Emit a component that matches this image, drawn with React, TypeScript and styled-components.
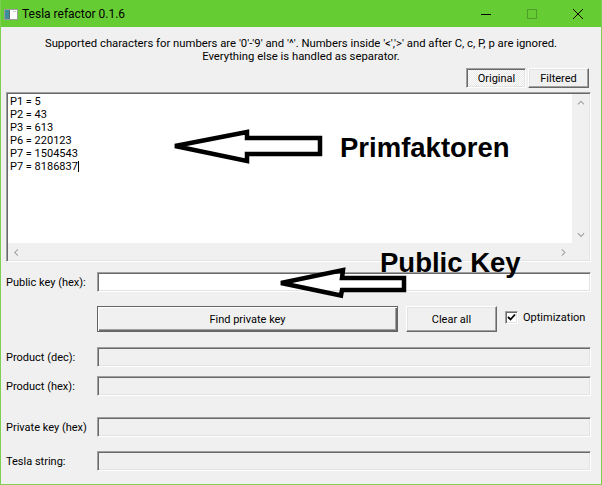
import React from "react";
import styled, { createGlobalStyle } from "styled-components";

const UI_FONT = `Roboto, "Liberation Sans", Arial, sans-serif`;

const GlobalStyle = createGlobalStyle`
  html, body {
    margin: 0;
    padding: 0;
    background: #f0f0f0;
  }
  body {
    font-family: ${UI_FONT};
  }
`;

const Window = styled.div`
  position: relative;
  box-sizing: border-box;
  width: 602px;
  height: 485px;
  border: 1px solid #7fcf52;
  border-top-color: #66cc33;
  background: #f0f0f0;
  display: flex;
  flex-direction: column;
  font-family: ${UI_FONT};
  font-size: 11px;
  color: #000;
  overflow: hidden;
`;

const TitleBar = styled.div`
  height: 26px;
  background: #66cc33;
  display: flex;
  align-items: center;
`;

const AppIcon = styled.svg`
  margin-left: 3px;
  flex: none;
`;

const Title = styled.span`
  margin-left: 4px;
  font-size: 12px;
  color: #000;
`;

const Captions = styled.div`
  margin-left: auto;
  display: flex;
  height: 100%;
`;

const CaptionButton = styled.div`
  width: 46px;
  height: 100%;
  display: flex;
  align-items: center;
  justify-content: center;
`;

const InfoText = styled.div`
  padding-top: 10px;
  font-size: 11.3px;
  line-height: 13px;
  text-align: center;
`;

const ToggleRow = styled.div`
  display: flex;
  justify-content: flex-end;
  gap: 2px;
  margin-top: 5px;
  padding-right: 12px;
`;

const ToggleButton = styled.div<{ $pressed?: boolean; $width: number }>`
  box-sizing: border-box;
  width: ${(p) => p.$width}px;
  height: 20px;
  display: flex;
  align-items: center;
  justify-content: center;
  border: 1px solid;
  ${(p) =>
    p.$pressed
      ? `
    border-color: #a0a0a0 #fff #fff #a0a0a0;
    box-shadow: inset 1px 1px #696969, inset -1px -1px #e3e3e3;
    background-color: #fff;
    background-image: repeating-conic-gradient(#e8e8e8 0 25%, #fff 0 50%);
    background-size: 2px 2px;
    padding: 1px 0 0 1px;
  `
      : `
    border-color: #fff #696969 #696969 #fff;
    box-shadow: inset -1px -1px #a0a0a0, inset 1px 1px #e3e3e3;
    background: #f0f0f0;
  `}
`;

const Panel = styled.div`
  padding: 0 10px 0 5px;
  display: flex;
  flex-direction: column;
`;

const TextBox = styled.div`
  box-sizing: border-box;
  margin-top: 4px;
  height: 170px;
  border: 1px solid;
  border-color: #a0a0a0 #fff #fff #a0a0a0;
  box-shadow: inset 1px 1px #696969, inset -1px -1px #e3e3e3;
  padding: 1px;
  display: grid;
  grid-template-columns: 1fr 17px;
  grid-template-rows: 1fr 17px;
  background: #fff;
`;

const Editor = styled.div`
  padding: 1px 2px;
  line-height: 13px;
  white-space: pre;
  overflow: hidden;
  background: #fff;
`;

const Caret = styled.span`
  display: inline-block;
  width: 1px;
  height: 11px;
  background: #000;
  vertical-align: -2px;
`;

const ScrollBar = styled.div<{ $vertical?: boolean }>`
  background: #f0f0f0;
  display: flex;
  flex-direction: ${(p) => (p.$vertical ? "column" : "row")};
  justify-content: space-between;
`;

const ScrollArrow = styled.div`
  width: 17px;
  height: 17px;
  display: flex;
  align-items: center;
  justify-content: center;
`;

const Corner = styled.div`
  background: #f0f0f0;
`;

const Row = styled.div<{ $gap: number }>`
  display: grid;
  grid-template-columns: 91px 1fr;
  align-items: center;
  margin-top: ${(p) => p.$gap}px;
`;

const Label = styled.span`
  white-space: nowrap;
`;

const Field = styled.div<{ $readOnly?: boolean }>`
  box-sizing: border-box;
  height: 20px;
  border: 1px solid;
  border-color: #a0a0a0 #fff #fff #a0a0a0;
  box-shadow: inset 1px 1px #696969, inset -1px -1px #e3e3e3;
  background: ${(p) => (p.$readOnly ? "#f0f0f0" : "#fff")};
`;

const ActionRow = styled.div`
  display: flex;
  align-items: center;
  margin-top: 14px;
  padding-left: 91px;
  height: 26px;
`;

const PushButton = styled.div<{ $width: number; $default?: boolean; $gap?: number }>`
  box-sizing: border-box;
  width: ${(p) => p.$width}px;
  height: 26px;
  margin-left: ${(p) => p.$gap ?? 0}px;
  display: flex;
  align-items: center;
  justify-content: center;
  background: #f0f0f0;
  ${(p) =>
    p.$default
      ? `
    border: 1px solid #646464;
    box-shadow: inset 1px 1px #fff, inset -1px -1px #696969, inset -2px -2px #a0a0a0;
  `
      : `
    border: 1px solid;
    border-color: #fff #696969 #696969 #fff;
    box-shadow: inset -1px -1px #a0a0a0, inset 1px 1px #e3e3e3;
  `}
`;

const CheckWrap = styled.label`
  display: flex;
  align-items: center;
  gap: 5px;
  margin-left: 8px;
  margin-bottom: 3px;
`;

const CheckBox = styled.span`
  box-sizing: border-box;
  width: 13px;
  height: 13px;
  border: 1px solid;
  border-color: #a0a0a0 #fff #fff #a0a0a0;
  box-shadow: inset 1px 1px #696969, inset -1px -1px #e3e3e3;
  background: #fff;
  display: flex;
  align-items: center;
  justify-content: center;
`;

const Annotation = styled.div<{ $x: number; $y: number }>`
  position: absolute;
  left: ${(p) => p.$x}px;
  top: ${(p) => p.$y}px;
  font-family: "Liberation Sans", Arial, sans-serif;
  font-weight: bold;
  font-size: 27.5px;
  line-height: 27px;
  color: #000;
  white-space: nowrap;
`;

const ArrowSvg = styled.svg<{ $x: number; $y: number }>`
  position: absolute;
  left: ${(p) => p.$x}px;
  top: ${(p) => p.$y}px;
  overflow: visible;
`;

const Chevron = ({ dir }: { dir: "up" | "down" | "left" | "right" }) => {
  const paths = {
    up: "M1 5.5 L4.5 2 L8 5.5",
    down: "M1 2 L4.5 5.5 L8 2",
    left: "M5.5 1 L2 4.5 L5.5 8",
    right: "M2 1 L5.5 4.5 L2 8",
  };
  return (
    <svg width="8" height="8" viewBox="0 0 9 8">
      <path d={paths[dir]} fill="none" stroke="#a6a6a6" strokeWidth="1.3" />
    </svg>
  );
};

const lines = [
  "P1 = 5",
  "P2 = 43",
  "P3 = 613",
  "P6 = 220123",
  "P7 = 1504543",
];

// hollow block arrow, coordinates in page pixels
const Arrow = ({ points, box }: { points: string; box: [number, number, number, number] }) => (
  <ArrowSvg
    $x={box[0] - 1}
    $y={box[1] - 1}
    width={box[2]}
    height={box[3]}
    viewBox={box.join(" ")}
  >
    <polygon points={points} fill="none" stroke="#000" strokeWidth="4.5" strokeLinejoin="miter" />
  </ArrowSvg>
);

const App: React.FC = () => {
  return (
    <>
      <GlobalStyle />
      <Window>
        <TitleBar>
          <AppIcon width="14" height="11" viewBox="0 0 14 11">
            <rect x="0.5" y="0.5" width="13" height="10" fill="#fff" stroke="#9c9c9c" />
            <rect x="1" y="1" width="4" height="9" fill="#3f8e9c" />
            <rect x="5" y="1" width="1" height="9" fill="#5d666b" />
            <rect x="9" y="2" width="3" height="1" fill="#c9c9c9" />
          </AppIcon>
          <Title>Tesla refactor 0.1.6</Title>
          <Captions>
            <CaptionButton>
              <svg width="10" height="10" viewBox="0 0 10 10">
                <line x1="0" y1="5.5" x2="10" y2="5.5" stroke="#000" strokeWidth="1" />
              </svg>
            </CaptionButton>
            <CaptionButton>
              <svg width="10" height="10" viewBox="0 0 10 10">
                <rect x="0.5" y="0.5" width="9" height="9" fill="none" stroke="#4e9d2b" strokeWidth="1" />
              </svg>
            </CaptionButton>
            <CaptionButton>
              <svg width="10" height="10" viewBox="0 0 10 10">
                <path d="M0 0 L10 10 M10 0 L0 10" stroke="#000" strokeWidth="1" />
              </svg>
            </CaptionButton>
          </Captions>
        </TitleBar>

        <InfoText>
          Supported characters for numbers are '0'-'9' and '^'. Numbers inside '&lt;','&gt;' and after C, c, P, p are ignored.
          <br />
          Everything else is handled as separator.
        </InfoText>

        <ToggleRow>
          <ToggleButton $pressed $width={60}>Original</ToggleButton>
          <ToggleButton $width={61}>Filtered</ToggleButton>
        </ToggleRow>

        <Panel>
          <TextBox>
            <Editor>
              {lines.map((l) => (
                <div key={l}>{l}</div>
              ))}
              <div>
                P7 = 8186837
                <Caret />
              </div>
            </Editor>
            <ScrollBar $vertical>
              <ScrollArrow>
                <Chevron dir="up" />
              </ScrollArrow>
              <ScrollArrow>
                <Chevron dir="down" />
              </ScrollArrow>
            </ScrollBar>
            <ScrollBar>
              <ScrollArrow>
                <Chevron dir="left" />
              </ScrollArrow>
              <ScrollArrow>
                <Chevron dir="right" />
              </ScrollArrow>
            </ScrollBar>
            <Corner />
          </TextBox>

          <Row $gap={10}>
            <Label>Public key (hex):</Label>
            <Field />
          </Row>

          <ActionRow>
            <PushButton $width={301} $default>
              Find private key
            </PushButton>
            <PushButton $width={91} $gap={8}>
              Clear all
            </PushButton>
            <CheckWrap>
              <CheckBox>
                <svg width="9" height="9" viewBox="0 0 9 9">
                  <path d="M1 4 L3.5 6.5 L8 1.5" fill="none" stroke="#000" strokeWidth="1.8" />
                </svg>
              </CheckBox>
              Optimization
            </CheckWrap>
          </ActionRow>

          <Row $gap={15}>
            <Label>Product (dec):</Label>
            <Field $readOnly />
          </Row>
          <Row $gap={9}>
            <Label>Product (hex):</Label>
            <Field $readOnly />
          </Row>
          <Row $gap={21}>
            <Label>Private key (hex)</Label>
            <Field $readOnly />
          </Row>
          <Row $gap={14}>
            <Label>Tesla string:</Label>
            <Field $readOnly />
          </Row>
        </Panel>

        <Arrow
          box={[168, 126, 158, 40]}
          points="175,146 247,132 247,138 320,138 320,154 247,154 247,161"
        />
        <Annotation $x={339} $y={133}>
          Primfaktoren
        </Annotation>

        <Arrow
          box={[274, 264, 136, 38]}
          points="281,283 343,270 342,278 404,278 404,290 342,290 341,295.5"
        />
        <Annotation $x={379} $y={248}>
          Public Key
        </Annotation>
      </Window>
    </>
  );
};

export default App;
